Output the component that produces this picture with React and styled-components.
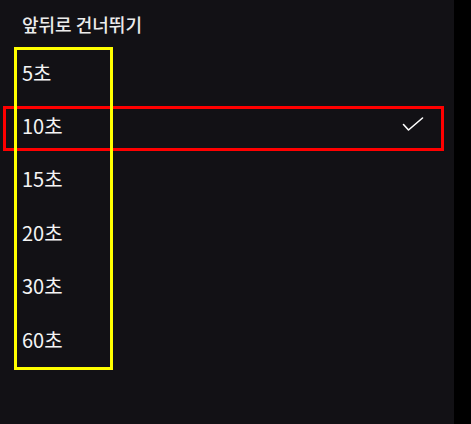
import styled, { createGlobalStyle } from "styled-components";

const options = ["5초", "10초", "15초", "20초", "30초", "60초"];
const selected = "10초";

export default function App() {
  return (
    <>
      <GlobalStyle />
      <Screen>
        <Panel>
          <Title>앞뒤로 건너뛰기</Title>
          <OptionList>
            {options.map((label) => (
              <OptionRow key={label}>
                <OptionLabel>{label}</OptionLabel>
                {label === selected && <CheckIcon />}
              </OptionRow>
            ))}
          </OptionList>
          <Highlight color="#ff0000" top={106} left={3} width={441} height={45} />
          <Highlight color="#ffff00" top={47} left={14} width={99} height={323} />
        </Panel>
        <Edge />
      </Screen>
    </>
  );
}

function CheckIcon() {
  return (
    <CheckSvg width="22" height="18" viewBox="0 0 22 18">
      <polyline
        points="1.5,8.5 6.5,14 20.5,2"
        fill="none"
        stroke="#ffffff"
        strokeWidth="1.6"
        strokeLinecap="round"
        strokeLinejoin="round"
      />
    </CheckSvg>
  );
}

const GlobalStyle = createGlobalStyle`
  html, body {
    margin: 0;
    padding: 0;
    background: #000;
  }
  body {
    font-family: "Noto Sans CJK KR", "Noto Sans", sans-serif;
  }
`;

const Screen = styled.div`
  display: flex;
  width: 471px;
  height: 424px;
  background: #000;
`;

const Panel = styled.div`
  position: relative;
  display: flex;
  flex-direction: column;
  width: 454px;
  height: 424px;
  background: #121115;
`;

const Edge = styled.div`
  flex: 1;
  background: #000;
`;

const Title = styled.h2`
  margin: 0;
  padding: 11px 0 0 22px;
  height: 35px;
  box-sizing: border-box;
  font-size: 18px;
  font-weight: 500;
  line-height: 26px;
  color: #ececec;
`;

const OptionList = styled.ul`
  list-style: none;
  margin: 0;
  padding: 11px 0 0;
  display: flex;
  flex-direction: column;
`;

const OptionRow = styled.li`
  display: flex;
  align-items: center;
  justify-content: space-between;
  height: 53.4px;
  padding: 0 30px 0 22px;
`;

const OptionLabel = styled.span`
  font-size: 20px;
  line-height: 1;
  color: #f4f4f4;
`;

const CheckSvg = styled.svg`
  display: block;
  margin-top: -2px;
`;

const Highlight = styled.div`
  position: absolute;
  top: ${(p) => p.top}px;
  left: ${(p) => p.left}px;
  width: ${(p) => p.width}px;
  height: ${(p) => p.height}px;
  box-sizing: border-box;
  border: 3px solid ${(p) => p.color};
  pointer-events: none;
`;
